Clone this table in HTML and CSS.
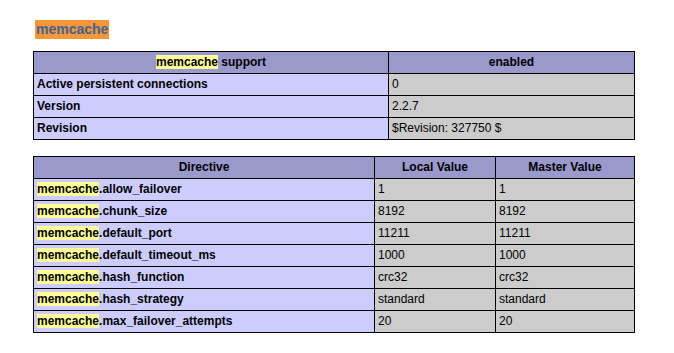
FILE: index.html
```html
<!DOCTYPE html>
<html>
<head>
<meta charset="utf-8">
<title>memcache</title>
<link rel="stylesheet" href="styles.css">
</head>
<body>
<div class="page">
  <h2 class="module"><span class="match-active">memcache</span></h2>

  <table class="info support">
    <colgroup><col class="c-label"><col class="c-value"></colgroup>
    <tr class="h"><th><span class="match">memcache</span> support</th><th>enabled</th></tr>
    <tr><td class="e">Active persistent connections</td><td class="v">0</td></tr>
    <tr><td class="e">Version</td><td class="v">2.2.7</td></tr>
    <tr><td class="e">Revision</td><td class="v">$Revision: 327750 $</td></tr>
  </table>

  <table class="info directives">
    <colgroup><col class="c-dir"><col class="c-local"><col class="c-master"></colgroup>
    <tr class="h"><th>Directive</th><th>Local Value</th><th>Master Value</th></tr>
    <tr><td class="e"><span class="match">memcache</span>.allow_failover</td><td class="v">1</td><td class="v">1</td></tr>
    <tr><td class="e"><span class="match">memcache</span>.chunk_size</td><td class="v">8192</td><td class="v">8192</td></tr>
    <tr><td class="e"><span class="match">memcache</span>.default_port</td><td class="v">11211</td><td class="v">11211</td></tr>
    <tr><td class="e"><span class="match">memcache</span>.default_timeout_ms</td><td class="v">1000</td><td class="v">1000</td></tr>
    <tr><td class="e"><span class="match">memcache</span>.hash_function</td><td class="v">crc32</td><td class="v">crc32</td></tr>
    <tr><td class="e"><span class="match">memcache</span>.hash_strategy</td><td class="v">standard</td><td class="v">standard</td></tr>
    <tr><td class="e"><span class="match">memcache</span>.max_failover_attempts</td><td class="v">20</td><td class="v">20</td></tr>
  </table>
</div>
</body>
</html>
```
FILE: styles.css
```css
html, body {
  margin: 0;
  padding: 0;
  background: #ffffff;
}

.page {
  padding: 20px 0 0 33px;
  font-family: "Liberation Sans", Arial, sans-serif;
  color: #000000;
}

.module {
  margin: 0 0 12px 2px;
  height: 19px;
  font-size: 14px;
  line-height: 19px;
  font-weight: bold;
}

.match-active {
  display: inline-block;
  background: #f8963a;
  color: #3b6494;
  padding: 0 1px;
  height: 19px;
}

.match {
  background: #ffff99;
}

.info {
  border-collapse: collapse;
  table-layout: fixed;
  width: 601px;
  font-size: 12px;
  line-height: 15px;
}

.info th,
.info td {
  border: 1px solid #000000;
  padding: 3px 3px;
  text-align: left;
  white-space: nowrap;
  overflow: hidden;
}

.info th {
  background: #9999cc;
  font-weight: bold;
  text-align: center;
}

.info td.e {
  background: #ccccff;
  font-weight: bold;
}

.info td.v {
  background: #cccccc;
  font-weight: normal;
}

.support {
  margin-bottom: 16px;
}

.c-label { width: 355px; }
.c-value { width: 246px; }

.c-dir { width: 341px; }
.c-local { width: 121px; }
.c-master { width: 139px; }
```
